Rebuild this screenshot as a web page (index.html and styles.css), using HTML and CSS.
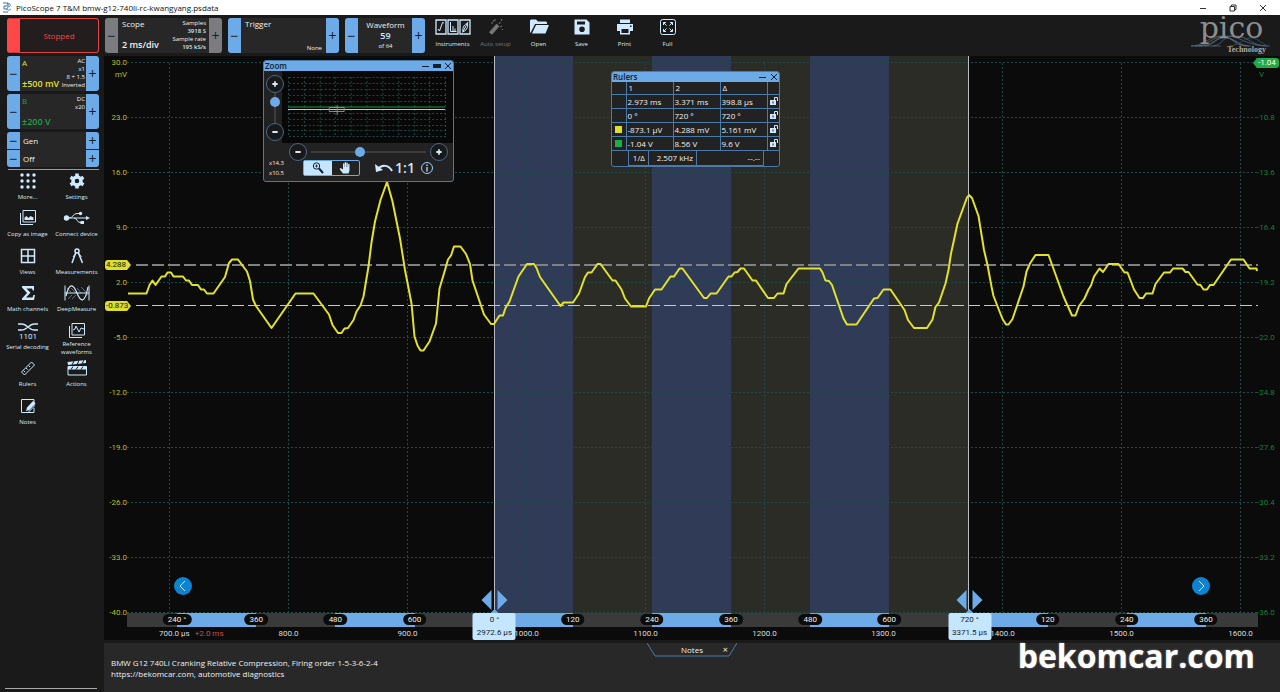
FILE: index.html
```html
<!DOCTYPE html>
<html lang="en">
<head>
    <meta charset="UTF-8">
    <meta name="viewport" content="width=device-width, initial-scale=1.0">
    <title>PicoScope 7 T&amp;M bmw-g12-740li-rc-kwangyang.psdata</title>
    <link rel="stylesheet" href="styles.css">
</head>
<body>
    <header class="titlebar">
        <svg class="app-icon" viewBox="0 0 10 11"><path d="M1 1h5v3H2v3h3M5 2c3-1 4 1 3 2s-3 1-3 3 3 1 4 0M1 10h5" fill="none" stroke="#3d76a8"/></svg>
        <span class="app-title">PicoScope 7 T&amp;M bmw-g12-740li-rc-kwangyang.psdata</span>
        <button class="win-button" aria-label="Minimize"><svg viewBox="0 0 8 8"><path d="M1 4.500h6"/></svg></button>
        <button class="win-button" aria-label="Restore"><svg viewBox="0 0 8 8"><path d="M1 2.500h4.500v4.500H1zM2.500 2.500V1H7v4.500H5.500"/></svg></button>
        <button class="win-button" aria-label="Close"><svg viewBox="0 0 8 8"><path d="M1 1l6 6M7 1L1 7"/></svg></button>
    </header>

    <div class="app">
        <aside class="sidebar">
            <button class="stopped">Stopped</button>

            <section class="panel channel-a">
                <button class="step" aria-label="A range down">−</button>
                <div class="panel-body">
                    <div class="panel-main"><span>A</span><strong>±500 mV</strong></div>
                    <div class="panel-info"><span>AC</span><span>x1</span><span>8 + 1.5</span><span>Inverted</span></div>
                </div>
                <button class="step" aria-label="A range up">+</button>
            </section>

            <section class="panel channel-b">
                <button class="step" aria-label="B range down">−</button>
                <div class="panel-body">
                    <div class="panel-main"><span>B</span><strong>±200 V</strong></div>
                    <div class="panel-info"><span>DC</span><span>x20</span></div>
                </div>
                <button class="step" aria-label="B range up">+</button>
            </section>

            <section class="gen">
                <div class="gen-row"><button class="step" aria-label="Gen down">−</button><span>Gen</span><button class="step" aria-label="Gen up">+</button></div>
                <div class="gen-row"><button class="step" aria-label="Off down">−</button><span>Off</span><button class="step" aria-label="Off up">+</button></div>
            </section>

            <nav class="menu">
                <button class="tool">
                    <svg viewBox="0 0 28 18"><g class="fill"><circle cx="8" cy="3" r="1.700"/><circle cx="14" cy="3" r="1.700"/><circle cx="20" cy="3" r="1.700"/><circle cx="8" cy="9" r="1.700"/><circle cx="14" cy="9" r="1.700"/><circle cx="20" cy="9" r="1.700"/><circle cx="8" cy="15" r="1.700"/><circle cx="14" cy="15" r="1.700"/><circle cx="20" cy="15" r="1.700"/></g></svg>
                    <span>More...</span>
                </button>
                <button class="tool">
                    <svg viewBox="0 0 28 18"><circle cx="14" cy="9" r="4" fill="none" stroke="#cfeaff" stroke-width="3.500"/><path d="M14 1.500v3M14 13.500v3M7.500 5.200l2.600 1.500M17.900 11.300l2.600 1.500M7.500 12.800l2.600-1.500M17.900 6.700l2.600-1.500" stroke-width="3.500"/></svg>
                    <span>Settings</span>
                </button>
                <button class="tool">
                    <svg viewBox="0 0 28 18"><path d="M9 1.500h12.500v11.500H9zM6.500 4v11.500H19"/><path class="fill" d="M10.500 11V8.500l2-1.500 2 2 2-2 3 1.500V11z"/></svg>
                    <span>Copy as image</span>
                </button>
                <button class="tool">
                    <svg viewBox="0 0 28 18"><path d="M3 9h20M6 9c4 0 4-4.500 8-4.500h3M11 9c3 0 3 4.500 6 4.500h2"/><circle class="fill" cx="3.500" cy="9" r="2.700"/><circle class="fill" cx="17.500" cy="4.500" r="1.700"/><path class="fill" d="M17.500 12h3.500v3h-3.500zM23 7l4 2-4 2z"/></svg>
                    <span>Connect device</span>
                </button>
                <button class="tool">
                    <svg viewBox="0 0 28 18"><path d="M7.500 2.500h13v13h-13zM14 2.500v13M7.500 9h13" stroke-width="1.500"/></svg>
                    <span>Views</span>
                </button>
                <button class="tool">
                    <svg viewBox="0 0 28 18"><path d="M13 5L9 16M15 5l4.500 11" stroke-width="1.500"/><path d="M13 6l-3 4M15.500 6l3 4"/><circle cx="14" cy="4" r="2" stroke-width="1.500"/></svg>
                    <span>Measurements</span>
                </button>
                <button class="tool">
                    <svg viewBox="0 0 28 18"><path class="fill" d="M8 2h12v4.500h-1.200L18 4.500h-5.500l4 4.300-4.500 4.700h6.500l1-2.500H21L20 16H8v-1.500l5-5.500-5-5.500z"/></svg>
                    <span>Math channels</span>
                </button>
                <button class="tool">
                    <svg viewBox="0 0 28 18"><path d="M2 1.500v15M26 1.500v15M2 9h24"/><path d="M3 12C6-1 10-1 14 9s8 10 11-6" stroke-width="1.200"/><path d="M4 4l4 4M8 4l5 5M14 4l4 5M18 3l6 6M5 15l4-4M9 15l4-4M21 14l4-4" stroke-width=".4"/></svg>
                    <span>DeepMeasure</span>
                </button>
                <button class="tool">
                    <svg viewBox="0 0 28 18"><path d="M4 2h4c5 0 7 6 12 6h4M4 8h4c5 0 7-6 12-6h4" stroke-width="1.500"/><text x="14" y="17" text-anchor="middle">1101</text></svg>
                    <span>Serial decoding</span>
                </button>
                <button class="tool">
                    <svg viewBox="0 0 28 18"><path d="M9 1.500h12.500v11.500H9zM6.500 4v11.500H19M10 8l2-1 1-3 3 6 2-4 3 1"/></svg>
                    <span>Reference waveforms</span>
                </button>
                <button class="tool">
                    <svg viewBox="0 0 28 18"><path d="M7.500 13L17.500 3l3 3-10 10zM9.500 11.500l1.500 1.500M12 9l1.500 1.500M14.500 6.500L16 8"/></svg>
                    <span>Rulers</span>
                </button>
                <button class="tool">
                    <svg viewBox="0 0 28 18"><path d="M5 7.500h18.500V16H5z"/><path class="fill" d="M4.500 3L23 1v3L5 6zM5 7h18.500v3.500H5z"/><path d="M9 6l2-4M14 5.500l2-4M19 5l2-4M8 10.500l2-3M13 10.500l2-3M18 10.500l2-3" stroke="#1b1b1b"/></svg>
                    <span>Actions</span>
                </button>
                <button class="tool">
                    <svg viewBox="0 0 28 18"><path d="M17 2.500H7.500v13H14l6-6V2.500h-4M14 15.500h6V11"/><path class="fill" d="M12 14l1-3.500L19 4l2.500 2.500-6 6.500z"/></svg>
                    <span>Notes</span>
                </button>
            </nav>
        </aside>

        <main class="workspace">
            <div class="toolbar">
                <section class="panel scope">
                    <button class="step" aria-label="Timebase down">−</button>
                    <div class="panel-body">
                        <div class="panel-main"><span>Scope</span><strong>2 ms/div</strong></div>
                        <div class="panel-info"><span>Samples</span><b>3918 S</b><span>Sample rate</span><b>195 kS/s</b></div>
                    </div>
                    <button class="step" aria-label="Timebase up">+</button>
                </section>

                <section class="panel trigger">
                    <button class="step" aria-label="Trigger down">−</button>
                    <div class="panel-body">
                        <div class="panel-main"><span>Trigger</span></div>
                        <div class="panel-info"><span>None</span></div>
                    </div>
                    <button class="step" aria-label="Trigger up">+</button>
                </section>

                <section class="panel waveform">
                    <button class="step" aria-label="Previous waveform">−</button>
                    <div class="panel-body"><span>Waveform</span><strong>59</strong><small>of 64</small></div>
                    <button class="step" aria-label="Next waveform">+</button>
                </section>

                <div class="tools">
                    <button class="tool">
                        <svg class="wide" viewBox="0 0 36 18"><path d="M1 2h10v14H1zM13 2h10v14H13zM25 2h10v14H25z" stroke-width="1.300"/><path d="M3 11l1.500 2L7.500 4.500 9 5M15.500 4v9.500h6M18 8v5M20 10.500v3M28 13.500c-1-4 2-8 4.500-8 1 4-2 8-4.500 8zM27.500 14.500L33 4"/></svg>
                        <span>Instruments</span>
                    </button>
                    <button class="tool" disabled>
                        <svg viewBox="0 0 28 18"><path d="M8.500 15.500L16 7" stroke-width="4"/><path d="M17 6l1.500-2M11 2l1 2M20 8l-2 1M20 1l-1 2M13 1v2M21 12l-1-1M9 5h2"/></svg>
                        <span>Auto setup</span>
                    </button>
                    <button class="tool">
                        <svg viewBox="0 0 28 18"><path class="fill" d="M5 15V2.500l1-1h5l2 2h8l1 1V6H10L6 14zM7 15.500L11 7h13l-3.500 8.500z"/></svg>
                        <span>Open</span>
                    </button>
                    <button class="tool">
                        <svg viewBox="0 0 28 18"><path class="fill" fill-rule="evenodd" d="M6.500 1.500h12l3 3v12h-15zM9 3.500v3h8v-3zM14 8.500a2.800 2.800 0 100 5.600 2.800 2.800 0 000-5.600z"/></svg>
                        <span>Save</span>
                    </button>
                    <button class="tool">
                        <svg viewBox="0 0 28 18"><path class="fill" fill-rule="evenodd" d="M9 1.500h10V5H9zM6 6h16v7h-3v3.500H9V13H6zM10.500 11v4h7v-4zM19 7.500V9h1.500V7.500z"/></svg>
                        <span>Print</span>
                    </button>
                    <button class="tool">
                        <svg viewBox="0 0 28 18"><rect x="6.500" y="1.500" width="15" height="15" rx="2"/><path d="M9.500 7V4.500H12M9.500 4.500l3 3M16 4.500h2.500V7M18.500 4.500l-3 3M9.500 11v2.500H12M9.500 13.500l3-3M16 13.500h2.500V11M18.500 13.500l-3-3"/></svg>
                        <span>Full</span>
                    </button>
                </div>

                <div class="logo">
                    <svg viewBox="0 0 80 12" aria-hidden="true"><path d="M0 11C14 11 18 1 30 1s12 10 26 10M4 11C18 11 20 2 32 2s12 9 26 9M8 11C22 11 22 3 34 3s12 8 26 8M0 11h30M14 11C26 9 26 0 38 1s18 10 40 10M22 11C34 9 30 1 44 1s16 10 32 10" fill="none" stroke="#5c7386" stroke-width=".7"/><path d="M38 11C50 10 52 3 60 3s10 7 19 8" fill="none" stroke="#254862"/></svg>
                    <span class="logo-name">pico</span>
                    <span class="logo-sub">Technology</span>
                </div>
            </div>

            <div class="plot">
                <div class="chart">
                    <svg class="trace" viewBox="104 56 1176 557" preserveAspectRatio="none">
                        <!-- cycle bands between the rulers -->
                        <path class="band-olive" d="M494 56h475v557H494z"/>
                        <path class="band-blue" d="M494 56h79v557h-79zM652 56h79v557h-79zM810 56h79v557h-79z"/>
                        <path class="grid" d="M127 62.500H1258M127 117.500H1258M127 172.500H1258M127 227.500H1258M127 282.500H1258M127 337.500H1258M127 392.500H1258M127 447.500H1258M127 502.500H1258M127 557.500H1258M127 612.500H1258"/>
                        <path class="grid" d="M169.500 63V612M288.500 63V612M407.500 63V612M526.500 63V612M645.500 63V612M764.500 63V612M883.500 63V612M1002.500 63V612M1121.500 63V612M1240.500 63V612"/>
                        <path class="level level-high" d="M136 265H1258"/>
                        <path class="level" d="M136 305.500H1258"/>
                        <path class="ruler" d="M494.500 56V613M968.500 56V613"/>
                        <polyline class="signal" points="128,293.500 146.500,293.500 149.500,285 152.500,280.500 155.500,285 161.500,276.500 165,276.500 167.500,272.500 171,272.500 173.500,276.500 183,276.500 186,280.500 189,280.500 192,285 198,285 201,289.500 204,289.500 207,293.500 213.500,293.500 225,277 229,263 232,259.500 238,259.500 247,271.500 250,281 253,299.500 256,306 271.500,328 295.500,293.500 313.500,293.500 329,314.500 332.500,325 338,333 341.500,333 344.500,328.500 348,328 353.500,320 356.500,311.500 360.500,305.500 363.500,296.500 368.500,266.500 371.500,242.500 375,221.500 380.500,200 387,182 392.500,201.500 400,238.500 405,270 411.500,303.500 414.500,336.500 417.500,345.500 420.500,350.500 423.500,350.500 429.500,341.500 436,323.500 439.500,288.500 445,270 448,259.500 451,255.500 454,246.500 460.500,246.500 466,254 470,264 472.500,280.500 484,314.500 491,324 494,324 499.500,315.500 503,315.500 505.500,308 509.500,301.500 518.500,276.500 527,264 534,264 536.500,268 540,277 560.500,306 563.500,302.500 573,302.500 579,293.500 585,277 588,272.500 591.500,272.500 597.500,264 600.500,264 612.500,280.500 615.500,280.500 621.500,289.500 625,298.500 631,306.500 646,306.500 649,298.500 655,289.500 661.500,289.500 670.500,276.500 674,276.500 679.500,268.500 682.500,268.500 704,298 707,298 710.500,293.500 716.500,293.500 728.500,276.500 731.500,276.500 734.500,272.500 737.500,272 740.500,268.500 744,268.500 752.500,280.500 756,280.500 768,298 774,298 777.500,293.500 783.500,293.500 786.500,284 798.500,268.500 820,268.500 822.500,272.500 825.500,280.500 829,281 832,285 843.500,318.500 847,324.500 856.500,324.500 874,298.500 877.500,298 883.500,289.500 890.500,289.500 904.500,310 908,320 914,328 927,328 932.500,319.500 935.500,307 939,302.500 945.500,283.500 948.500,270 951,253.500 954,240 957.500,223.500 967,197.500 969,195 972,198 978.500,216 984,250 987.500,265 991.500,286.500 993.500,296 1002.500,319 1006,324.500 1008.500,324.500 1012.500,319 1023.500,286.500 1026.500,271.500 1030,263.500 1035.500,255 1048.500,255 1063.500,296.500 1072,315.500 1075.500,315.500 1079,306 1084.500,298.500 1088.500,289.500 1091,285.500 1094,276.500 1099.500,268.500 1103,272 1108.500,264 1118.500,264 1124.500,272.500 1127.500,272.500 1134,289.500 1139.500,298 1143,298 1146,293.500 1152.500,293.500 1155.500,284 1164,272.500 1170,272.500 1173,268.500 1182.500,268.500 1185.500,272 1188.500,272 1197.500,284.500 1200.500,285 1203.500,289.500 1207,289.500 1210,285 1213.500,285 1231,259.500 1243.500,259.500 1249.500,268.500 1256.500,268.500 1257,271"/>
                    </svg>
                    <div class="axis axis-a">
                        <span>30.0<i>mV</i></span><span>23.0</span><span>16.0</span><span>9.0</span><span>2.0</span><span>-5.0</span><span>-12.0</span><span>-19.0</span><span>-26.0</span><span>-33.0</span><span>-40.0</span>
                    </div>
                    <div class="axis axis-b">
                        <span><b class="flag flag-b">-1.04</b><i>V</i></span><span>-10.8</span><span>-13.6</span><span>-16.4</span><span>-19.2</span><span>-22.0</span><span>-24.8</span><span>-27.6</span><span>-30.4</span><span>-33.2</span><span>-36.0</span>
                    </div>
                    <span class="flag flag-high">4.288</span>
                    <span class="flag flag-low">-0.873</span>

                    <button class="scroll scroll-left" aria-label="Scroll left"><svg viewBox="0 0 16 16"><path d="M10 3L5 8l5 5"/></svg></button>
                    <button class="scroll scroll-right" aria-label="Scroll right"><svg viewBox="0 0 16 16"><path d="M6 3l5 5-5 5"/></svg></button>
                </div>

                <div class="degrees">
                    <div class="seg seg-first"></div>
                    <div class="seg on"><span>240 °</span></div>
                    <div class="seg"><span>360</span></div>
                    <div class="seg on"><span>480</span></div>
                    <div class="seg"><span>600</span></div>
                    <div class="seg on"></div>
                    <div class="seg"><span>120</span></div>
                    <div class="seg on"><span>240</span></div>
                    <div class="seg"><span>360</span></div>
                    <div class="seg on"><span>480</span></div>
                    <div class="seg"><span>600</span></div>
                    <div class="seg on"></div>
                    <div class="seg"><span>120</span></div>
                    <div class="seg on"><span>240</span></div>
                    <div class="seg seg-last"><span>360</span></div>
                </div>
                <div class="times">
                    <span>700.0 µs <em>+2.0 ms</em></span><span>800.0</span><span>900.0</span><span>1000.0</span><span>1100.0</span><span>1200.0</span><span>1300.0</span><span>1400.0</span><span>1500.0</span><span>1600.0</span>
                </div>

                <div class="marker marker-1">
                    <svg viewBox="0 0 28 24"><path d="M11 1v20L1 11zM17 1v20l10-10zM10 24l4-4 4 4z"/></svg>
                    <div class="marker-tag"><span>0 °</span><span>2972.6 µs</span></div>
                </div>
                <div class="marker marker-2">
                    <svg viewBox="0 0 28 24"><path d="M11 1v20L1 11zM17 1v20l10-10zM10 24l4-4 4 4z"/></svg>
                    <div class="marker-tag"><span>720 °</span><span>3371.5 µs</span></div>
                </div>

                <section class="window zoom-window">
                    <header class="window-title">
                        <span>Zoom</span>
                        <button aria-label="Minimize"><svg viewBox="0 0 8 8"><path d="M0 4.500h7"/></svg></button>
                        <button aria-label="Restore"><svg viewBox="0 0 8 8"><path d="M0 4h8" stroke-width="4"/></svg></button>
                        <button aria-label="Close"><svg viewBox="0 0 8 8"><path d="M1 1l6 6M7 1L1 7"/></svg></button>
                    </header>
                    <div class="zoom-top">
                        <div class="zoom-vertical">
                            <button class="round" aria-label="Zoom in vertically"><svg viewBox="0 0 18 18"><path d="M6 9h6M9 6v6"/></svg></button>
                            <input type="range" class="slider-v" aria-label="Vertical zoom" min="0" max="100" value="22">
                            <button class="round" aria-label="Zoom out vertically"><svg viewBox="0 0 18 18"><path d="M6 9h6"/></svg></button>
                        </div>
                        <svg class="overview" viewBox="0 0 172 72" preserveAspectRatio="none">
                            <path class="grid" d="M7 6.500h158M7 12.500h158M7 18.500h158M7 24.500h158M7 30.500h158M7 42.500h158M7 48.500h158M7 54.500h158M7 59.500h158M7 65.500h158M6.500 6v60M22.500 6v60M38.500 6v60M53.500 6v60M69.500 6v60M85.500 6v60M101.500 6v60M117.500 6v60M133.500 6v60M148.500 6v60M164.500 6v60"/>
                            <path d="M6 36h158" stroke="#159c3e"/>
                            <path d="M6 38.500h158" stroke="#d9d936"/>
                            <path d="M47.500 36.500h15v4h-15zM55.500 34v10" fill="none" stroke="#8b8b8b"/>
                        </svg>
                    </div>
                    <div class="zoom-horizontal">
                        <button class="round" aria-label="Zoom out horizontally"><svg viewBox="0 0 18 18"><path d="M6 9h6"/></svg></button>
                        <input type="range" class="slider-h" aria-label="Horizontal zoom" min="0" max="100" value="42">
                        <button class="round" aria-label="Zoom in horizontally"><svg viewBox="0 0 18 18"><path d="M6 9h6M9 6v6"/></svg></button>
                    </div>
                    <div class="zoom-bottom">
                        <div class="factors"><span>x14.3</span><span>x10.5</span></div>
                        <div class="modes">
                            <button class="mode active" aria-label="Zoom"><svg viewBox="0 0 16 14"><circle cx="6.500" cy="5" r="3.200"/><path d="M9 7.500l4 4.500" stroke-width="2"/><path d="M5 5h3M6.500 3.500v3" stroke-width=".8"/></svg></button>
                            <button class="mode" aria-label="Pan"><svg viewBox="0 0 16 14"><path class="hand" d="M6 12.500L2.500 8l1.200-1L6 8.500V2.500h1.400V6h.3V1.200h1.400V6h.3V1.700h1.400V6h.3V3h1.400v6.500l-1 3z"/></svg></button>
                        </div>
                        <button class="undo" aria-label="Undo zoom"><svg viewBox="0 0 20 14"><path d="M4 8C8 3 15 4 18 10" fill="none" stroke="#cfeaff" stroke-width="2"/><path d="M1 3l1 8 7-2z" fill="#cfeaff" stroke="none"/></svg></button>
                        <button class="one">1:1</button>
                        <button class="info" aria-label="Info"><svg viewBox="0 0 14 14"><circle cx="7" cy="7" r="5.500"/><path d="M7 6v4.500M7 3.500v1.500" stroke-width="1.500"/></svg></button>
                    </div>
                </section>

                <section class="window rulers-window">
                    <header class="window-title">
                        <span>Rulers</span>
                        <button aria-label="Minimize"><svg viewBox="0 0 8 8"><path d="M0 4.500h7"/></svg></button>
                        <button aria-label="Close"><svg viewBox="0 0 8 8"><path d="M1 1l6 6M7 1L1 7"/></svg></button>
                    </header>
                    <table class="rulers-table">
                        <thead>
                            <tr><th></th><th>1</th><th>2</th><th>Δ</th><th></th></tr>
                        </thead>
                        <tbody>
                            <tr><td></td><td>2.973 ms</td><td>3.371 ms</td><td>398.8 µs</td><td><button aria-label="Lock time"><svg viewBox="0 0 10 10"><path class="fill" d="M1 4h6v5H1z"/><path d="M5.500 4V1.500h3V5"/><path class="keyhole" d="M4 5.500v2"/></svg></button></td></tr>
                            <tr><td></td><td>0 °</td><td>720 °</td><td>720 °</td><td><button aria-label="Lock phase"><svg viewBox="0 0 10 10"><path class="fill" d="M1 4h6v5H1z"/><path d="M5.500 4V1.500h3V5"/><path class="keyhole" d="M4 5.500v2"/></svg></button></td></tr>
                            <tr><td><i class="swatch swatch-a"></i></td><td>-873.1 µV</td><td>4.288 mV</td><td>5.161 mV</td><td><button aria-label="Lock channel A"><svg viewBox="0 0 10 10"><path class="fill" d="M1 4h6v5H1z"/><path d="M5.500 4V1.500h3V5"/><path class="keyhole" d="M4 5.500v2"/></svg></button></td></tr>
                            <tr><td><i class="swatch swatch-b"></i></td><td>-1.04 V</td><td>8.56 V</td><td>9.6 V</td><td><button aria-label="Lock channel B"><svg viewBox="0 0 10 10"><path class="fill" d="M1 4h6v5H1z"/><path d="M5.500 4V1.500h3V5"/><path class="keyhole" d="M4 5.500v2"/></svg></button></td></tr>
                        </tbody>
                    </table>
                    <div class="frequency"><span>1/Δ</span><span>2.507 kHz</span><span>--.--</span></div>
                </section>
            </div>

            <footer class="notes">
                <div class="notes-tab">
                    <svg viewBox="0 0 90 14" preserveAspectRatio="none"><path d="M0 0l8 13h74l8-13"/></svg>
                    <span>Notes</span><button aria-label="Close notes">×</button>
                </div>
                <p>BMW G12 740Li Cranking Relative Compression, Firing order 1-5-3-6-2-4<br>https://bekomcar.com, automotive diagnostics</p>
                <div class="watermark">bekomcar.com</div>
            </footer>
        </main>
    </div>
</body>
</html>
```

FILE: styles.css
```css
* {
    box-sizing: border-box;
}
body {
    margin: 0;
    height: 100vh;
    display: flex;
    flex-direction: column;
    overflow: hidden;
    background: #1a1a1a;
    color: #f0f0f0;
    font-family: 'Open Sans', 'Noto Sans', sans-serif;
    font-size: 8px;
    line-height: 10px;
}
button {
    margin: 0;
    padding: 0;
    border: 0;
    background: none;
    color: inherit;
    font: inherit;
    cursor: pointer;
}
svg {
    display: block;
    fill: none;
    stroke: #cfeaff;
}
svg .fill {
    fill: #cfeaff;
    stroke: none;
}

/* Title bar */
.titlebar {
    flex: none;
    height: 15px;
    display: flex;
    align-items: center;
    background: #fff;
    color: #111;
    padding: 0 2px;
}
.app-icon {
    width: 10px;
    height: 11px;
    margin-right: 4px;
}
.app-title {
    flex: 1;
}
.win-button {
    width: 30px;
    height: 15px;
    display: flex;
    align-items: center;
    justify-content: center;
}
.win-button svg {
    width: 8px;
    height: 8px;
    stroke: #333;
}

.app {
    flex: 1;
    min-height: 0;
    display: grid;
    grid-template-columns: 104px 1fr;
}

/* Left side */
.sidebar {
    display: flex;
    flex-direction: column;
    gap: 2px;
    padding: 3px 6px 3px 7px;
}
.sidebar::after {
    content: '';
    margin: auto 0 0 -2px;
    width: 92px;
    border-top: 1px solid #aaa;
}
.stopped {
    width: 92px;
    height: 35px;
    flex: none;
    border: 1px solid #e04444;
    border-left: 13px solid #ff4747;
    border-radius: 3px;
    background: #231d1d;
    color: #e84a4a;
}
.panel {
    display: flex;
    height: 35px;
    border-radius: 3px;
    overflow: hidden;
    background: #272727;
}
.sidebar .panel,
.gen {
    width: 92px;
    flex: none;
}
.step {
    flex: none;
    width: 13px;
    background: #6cabe8;
    color: #10202e;
    font-size: 14px;
    line-height: 14px;
}
.panel-body {
    flex: 1;
    display: flex;
    justify-content: space-between;
    padding: 1px 1px 2px 2px;
    white-space: nowrap;
}
.panel-main {
    display: flex;
    flex-direction: column;
    justify-content: space-between;
}
.panel-main strong {
    font-size: 9px;
    font-weight: 600;
    line-height: 12px;
}
.panel-info {
    display: flex;
    flex-direction: column;
    align-items: flex-end;
    font-size: 6px;
    line-height: 8px;
}
.panel-info b {
    color: #cfeaff;
    font-weight: 600;
}
.sidebar .panel {
    margin-top: 1px;
}
.sidebar .panel-body {
    position: relative;
    padding-top: 2px;
    padding-bottom: 1px;
}
.sidebar .panel-info {
    position: absolute;
    right: 1px;
    top: 1px;
}
.channel-a .panel-main {
    color: #e0e032;
}
.channel-b .panel-main {
    color: #1fa046;
}
.gen {
    height: 35px;
    border-radius: 3px;
    overflow: hidden;
    background: #272727;
    display: flex;
    flex-direction: column;
    gap: 1px;
    margin-top: 1px;
}
.gen-row {
    flex: 1;
    display: flex;
    align-items: center;
}
.gen-row .step {
    height: 17px;
}
.gen-row span {
    flex: 1;
    padding-left: 3px;
}

.menu {
    width: 98px;
    height: 265px;
    margin-left: -4px;
    display: grid;
    grid-template-columns: 1fr 1fr;
    grid-template-rows: repeat(7, 1fr);
    position: relative;
    padding-top: 3px;
}
.menu::before {
    content: '';
    position: absolute;
    left: 5px;
    right: 2px;
    top: 0;
    border-top: 1px solid #999;
}
.tool {
    display: flex;
    flex-direction: column;
    align-items: center;
    justify-content: flex-start;
    font-size: 6px;
    line-height: 8px;
    color: #dcebf5;
}
.tool svg {
    flex: none;
    width: 28px;
    height: 18px;
}
.tool svg.wide {
    width: 36px;
}
.tool text {
    fill: #cfeaff;
    stroke: none;
    font: 8px Roboto, sans-serif;
}
.menu .tool span {
    margin-top: 3px;
}
.menu .tool:nth-child(10) span {
    margin-top: 0;
    width: 40px;
}
.menu .tool:nth-child(-n+9) span,
.menu .tool:nth-child(n+11) span {
    white-space: nowrap;
}

/* Toolbar */
.workspace {
    min-width: 0;
    min-height: 0;
    display: flex;
    flex-direction: column;
}
.toolbar {
    flex: none;
    height: 41px;
    display: flex;
    align-items: flex-start;
    gap: 6px;
    padding: 3px 8px 0 1px;
}
.scope {
    width: 117px;
}
.scope .step {
    background: #7b7b80;
}
.scope .panel-body {
    padding-left: 4px;
}
.scope .panel-info {
    padding-right: 2px;
}
.trigger {
    width: 111px;
}
.trigger .panel-body {
    padding: 1px 4px 1px 4px;
}
.trigger .panel-info {
    justify-content: flex-end;
}
.waveform {
    width: 80px;
}
.waveform .panel-body {
    flex-direction: column;
    align-items: center;
    padding-top: 2px;
}
.waveform strong {
    font-size: 9px;
    font-weight: 600;
    color: #cfeaff;
}
.waveform small {
    font-size: 6px;
}
.tools {
    display: flex;
}
.tools .tool {
    width: 43px;
}
.tools .tool span {
    margin-top: 4px;
}
.tool:disabled {
    color: #777;
}
.tool:disabled svg {
    stroke: #777;
}
.logo {
    position: relative;
    width: 81px;
    height: 36px;
    margin-left: auto;
    display: flex;
    flex-direction: column;
    color: #8d8d8d;
}
.logo svg {
    position: absolute;
    left: 0;
    top: 17px;
    width: 80px;
    height: 12px;
}
.logo-name {
    position: relative;
    font-family: 'DejaVu Serif', serif;
    font-size: 30px;
    line-height: 20px;
    text-align: center;
}
.logo-sub {
    align-self: flex-end;
    margin: 7px 6px 0 0;
    color: #aaa;
    font: bold 8px/10px 'Liberation Serif', serif;
}

/* Plot */
.plot {
    position: relative;
    flex: 1;
    min-height: 0;
    display: flex;
    flex-direction: column;
    overflow: hidden;
    background: #0b0b0b;
    font-family: Roboto, sans-serif;
}
.chart {
    position: relative;
    flex: 1;
    min-height: 0;
    display: flex;
    justify-content: space-between;
}
.trace {
    position: absolute;
    inset: 0;
    width: 100%;
    height: 100%;
}
.band-olive {
    fill: #2b2c25;
    stroke: none;
}
.band-blue {
    fill: #303b58;
    stroke: none;
}
.grid {
    stroke: #1d4a48;
    stroke-dasharray: 2 2;
}
.level {
    stroke: #c4c8ca;
    stroke-dasharray: 12 4;
}
.level-high {
    stroke: #7e8284;
    stroke-width: 2;
}
.ruler {
    stroke: #b9bcc0;
}
.signal {
    stroke: #e2e22c;
    stroke-width: 2;
    stroke-linejoin: round;
}
.axis {
    position: relative;
    display: flex;
    flex-direction: column;
    justify-content: space-between;
    margin-bottom: -5px;
    padding-top: 2px;
}
.axis span {
    position: relative;
    height: 10px;
}
.axis i {
    position: absolute;
    top: 12px;
    right: 0;
    font-style: normal;
}
.axis-a {
    width: 23px;
    text-align: right;
    color: #b9bd2b;
}
.axis-b {
    width: 23px;
    color: #1c7d38;
}
.axis-b i {
    left: 2px;
}
.flag {
    height: 10px;
    background: #dede2c;
    color: #15150a;
    border-radius: 3px;
    font-weight: 400;
}
.flag-high,
.flag-low {
    position: absolute;
    left: 1px;
    width: 26px;
    padding-left: 1px;
    clip-path: polygon(0 0, 85% 0, 100% 50%, 85% 100%, 0 100%);
}
.flag-high {
    top: 37%;
    margin-top: -2px;
}
.flag-low {
    top: 44%;
}
.flag-b {
    position: absolute;
    left: -4px;
    width: 26px;
    padding-left: 5px;
    background: #1fab48;
    color: #fff;
    clip-path: polygon(15% 0, 100% 0, 100% 100%, 15% 100%, 0 50%);
}
.scroll {
    position: absolute;
    bottom: 18px;
    width: 18px;
    height: 18px;
    border-radius: 50%;
    background: #0c84d2;
    display: flex;
    align-items: center;
    justify-content: center;
}
.scroll svg {
    width: 16px;
    height: 16px;
}
.scroll-left {
    left: 70px;
}
.scroll-right {
    right: 70px;
}

.degrees {
    flex: none;
    height: 14px;
    margin: 0 22px 0 23px;
    display: flex;
}
.seg {
    position: relative;
    flex: 79;
    background: #3a3a3a;
}
.seg.on {
    background: #6cabe8;
}
.seg-first {
    flex: 50;
}
.seg-last {
    flex: 52;
}
.seg span {
    position: absolute;
    z-index: 1;
    left: 0;
    top: 1px;
    transform: translateX(-50%);
    padding: 0 5px;
    height: 11px;
    line-height: 11px;
    border-radius: 6px;
    background: #0b0b0b;
    white-space: nowrap;
}
.times {
    flex: none;
    height: 13px;
    line-height: 13px;
    display: grid;
    grid-template-columns: repeat(10, 1fr);
    margin: 0 -20px 0 6px;
    text-align: center;
    white-space: nowrap;
    color: #ddd;
}
.times span:first-child {
    text-align: left;
    padding-left: 49px;
}
.times em {
    margin-left: 3px;
    font-style: normal;
    color: #d54848;
}

.marker {
    position: absolute;
    z-index: 2;
    bottom: 0;
    transform: translateX(-50%);
    display: flex;
    flex-direction: column;
    align-items: center;
}
.marker-1 {
    left: 33.2%;
}
.marker-2 {
    left: 73.6%;
}
.marker svg {
    width: 28px;
    height: 24px;
    fill: #6cabe8;
    stroke: none;
}
.marker-tag {
    display: flex;
    flex-direction: column;
    align-items: center;
    width: 43px;
    height: 27px;
    border-radius: 2px;
    background: #c4e6ff;
    color: #16222c;
    line-height: 13px;
    white-space: nowrap;
}

/* Floating windows */
.window {
    position: absolute;
    border: 1px solid #4a7aa8;
    border-radius: 3px;
    background: #222;
    font-family: 'Open Sans', 'Noto Sans', sans-serif;
    overflow: hidden;
}
.window-title {
    display: flex;
    align-items: center;
    gap: 3px;
    height: 10px;
    padding: 0 1px;
    background: #6cabe8;
    color: #10202e;
}
.window-title span {
    flex: 1;
    font-weight: 600;
}
.window-title svg {
    width: 8px;
    height: 8px;
    stroke: #10202e;
}
.zoom-window {
    left: 159px;
    top: 4px;
    width: 191px;
    height: 122px;
}
.zoom-top {
    display: flex;
    height: 72px;
}
.zoom-vertical {
    width: 18px;
    flex: none;
    display: flex;
    flex-direction: column;
    align-items: center;
    padding: 4px 0 2px 3px;
}
.round {
    flex: none;
    width: 18px;
    height: 18px;
    border: 1px solid #48688a;
    border-radius: 50%;
    background: #191919;
}
.zoom-vertical .round {
    position: relative;
    z-index: 1;
}
.round svg {
    width: 16px;
    height: 16px;
    stroke-width: 2;
}
.overview {
    flex: 1;
    min-width: 0;
    height: 72px;
    background: #080808;
}
input[type="range"] {
    appearance: none;
    margin: 0;
}
input[type="range"]::-webkit-slider-thumb {
    appearance: none;
    width: 10px;
    height: 10px;
    border-radius: 50%;
    background: #6cabe8;
}
.slider-h {
    flex: 1;
    min-width: 0;
    height: 10px;
    background: linear-gradient(#3d3d3d, #3d3d3d) center / 100% 2px no-repeat;
}
.slider-v {
    writing-mode: vertical-lr;
    flex: 1;
    width: 10px;
    min-height: 0;
    background: linear-gradient(#3d3d3d, #3d3d3d) center / 2px 100% no-repeat;
}
.zoom-horizontal {
    display: flex;
    align-items: center;
    gap: 4px;
    padding: 0 5px 0 25px;
}
.zoom-bottom {
    display: flex;
    align-items: center;
    padding-left: 5px;
    height: 20px;
    margin-top: -3px;
}
.factors {
    display: flex;
    flex-direction: column;
    width: 34px;
    font-size: 6px;
    line-height: 10px;
}
.modes {
    display: flex;
    width: 57px;
    height: 16px;
    border: 1px solid #6cabe8;
    border-radius: 2px;
}
.mode {
    flex: 1;
    display: flex;
    align-items: center;
    justify-content: center;
}
.mode svg {
    width: 16px;
    height: 14px;
    stroke: #10202e;
}
.mode .hand {
    fill: #cfeaff;
    stroke: none;
}
.mode.active {
    background: #c4e6ff;
}
.undo {
    margin-left: 14px;
}
.undo svg {
    width: 20px;
    height: 14px;
}
.one {
    width: 22px;
    color: #cfeaff;
    font-size: 14px;
    font-weight: 600;
    line-height: 16px;
}
.info {
    margin-left: 4px;
}
.info svg {
    width: 14px;
    height: 14px;
    stroke: #9fcdf5;
}

.rulers-window {
    left: 507px;
    top: 15px;
    width: 169px;
    height: 96px;
}
.rulers-table {
    width: 100%;
    table-layout: fixed;
    border-collapse: collapse;
}
.rulers-table th,
.rulers-table td {
    width: 47px;
    height: 14px;
    padding: 0 0 0 1px;
    border: 1px solid #4a7aa8;
    border-width: 0 1px 1px 0;
    font-weight: 400;
    line-height: 11px;
    text-align: left;
    white-space: nowrap;
}
.rulers-table th {
    height: 12px;
    padding-left: 2px;
}
.rulers-table th:first-child {
    width: 14px;
}
.rulers-table th:last-child {
    width: 12px;
}
.rulers-table th:last-child,
.rulers-table td:last-child {
    border-right: 0;
}
.rulers-table button {
    display: block;
}
.rulers-table svg {
    width: 10px;
    height: 10px;
}
.rulers-table .keyhole {
    stroke: #222;
}
.swatch {
    display: block;
    width: 7px;
    height: 7px;
    margin-left: 2px;
}
.swatch-a {
    background: #dede2c;
}
.swatch-b {
    background: #1fab48;
}
.frequency {
    display: flex;
    margin: 0 15px 0 16px;
    border: 1px solid #4a7aa8;
    border-top: 0;
    line-height: 14px;
    text-align: right;
}
.frequency span {
    width: 20px;
    padding-right: 3px;
    border-right: 1px solid #4a7aa8;
}
.frequency span:nth-child(2) {
    width: 48px;
}
.frequency span:last-child {
    flex: 1;
    border-right: 0;
}

/* Notes */
.notes {
    position: relative;
    flex: none;
    height: 49px;
    margin-top: 3px;
    padding: 14px 7px 0;
    background: #282828;
}
.notes p {
    margin: 0;
    line-height: 11px;
}
.notes-tab {
    position: absolute;
    left: 50%;
    top: 0;
    width: 90px;
    height: 14px;
    transform: translateX(-50%);
    display: flex;
    align-items: center;
    justify-content: center;
}
.notes-tab svg {
    position: absolute;
    inset: 0;
    width: 90px;
    height: 14px;
    stroke: #4a7aa8;
}
.notes-tab button {
    position: absolute;
    right: 9px;
    font-size: 9px;
}
.watermark {
    position: absolute;
    right: 25px;
    bottom: 22px;
    color: #fff;
    font-size: 32px;
    font-weight: 700;
    line-height: 28px;
    text-shadow: 0 0 2px #999;
}
```
